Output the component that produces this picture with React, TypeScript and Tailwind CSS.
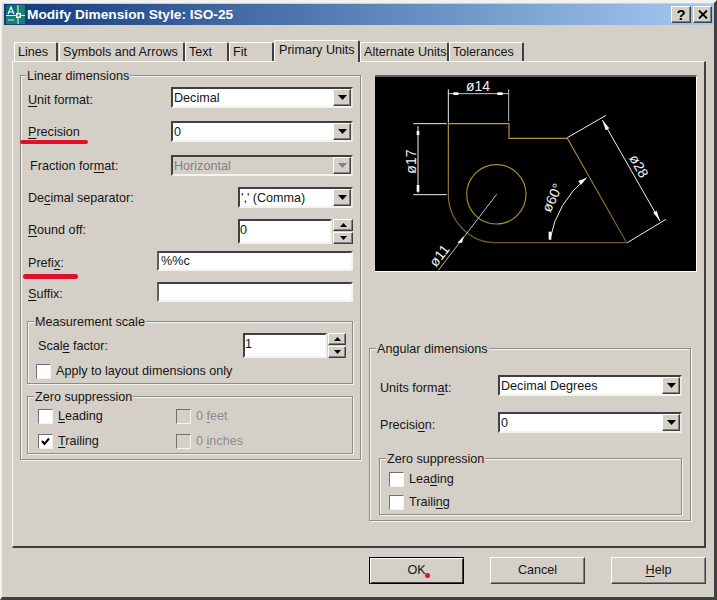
import React from "react";

const raisedBtn =
  "bg-[#d4d0c8] border border-t-white border-l-white border-r-[#404040] border-b-[#404040] shadow-[inset_-1px_-1px_0_#808080]";

function Arrow({ disabled, up, small }: { disabled?: boolean; up?: boolean; small?: boolean }) {
  const w = small ? 7 : 9;
  const h = small ? 4 : 5;
  return (
    <svg width={w} height={h} viewBox={`0 0 ${w} ${h}`}>
      <polygon
        points={up ? `${w / 2},0 ${w},${h} 0,${h}` : `0,0 ${w},0 ${w / 2},${h}`}
        fill={disabled ? "#808080" : "#000"}
      />
    </svg>
  );
}

function Combo({ value, w, disabled, h = "h-[21px]" }: { value: string; w: string; disabled?: boolean; h?: string }) {
  return (
    <div
      className={`${w} ${h} flex items-center justify-between border-2 border-t-[#404040] border-l-[#404040] border-r-[#e8e6e0] border-b-[#f4f3ef] ${disabled ? "bg-[#d4d0c8] text-[#808080]" : "bg-white"}`}
    >
      <span className="pl-[1px] pt-[2px] leading-none">{value}</span>
      <div className={`${raisedBtn} w-[18px] h-[17px] flex items-center justify-center`}>
        <Arrow disabled={disabled} />
      </div>
    </div>
  );
}

function Spinner({ value, fieldW, spinW }: { value: string; fieldW: string; spinW: string }) {
  return (
    <div className="flex">
      <div
        className={`${fieldW} h-[25px] bg-white border-2 border-t-[#404040] border-l-[#404040] border-r-[#f0efeb] border-b-[#f4f3ef] flex items-center leading-none pb-[2px]`}
      >
        {value}
      </div>
      <div className={`${spinW} h-[25px] flex flex-col gap-[1px] ml-[1px]`}>
        <div className={`${raisedBtn} h-[12px] flex items-center justify-center`}>
          <Arrow up small />
        </div>
        <div className={`${raisedBtn} h-[12px] flex items-center justify-center`}>
          <Arrow small />
        </div>
      </div>
    </div>
  );
}

function TextField({ value, w }: { value: string; w: string }) {
  return (
    <div
      className={`${w} h-[20px] bg-white border-2 border-t-[#404040] border-l-[#606060] border-r-[#f4f3ef] border-b-[#f4f3ef] flex items-center pl-[2px] leading-none`}
    >
      {value}
    </div>
  );
}

function Check({ checked, disabled, label, ml }: { checked?: boolean; disabled?: boolean; label: React.ReactNode; ml?: string }) {
  return (
    <div className={`flex items-center ${ml ?? ""} ${disabled ? "text-[#8c8c8c]" : ""}`}>
      <div
        className={`w-[15px] h-[15px] border border-t-[#707070] border-l-[#707070] border-r-[#f4f3ef] border-b-[#f4f3ef] flex items-center justify-center ${disabled ? "bg-[#d4d0c8]" : "bg-white"}`}
      >
        {checked && (
          <svg width="9" height="9" viewBox="0 0 9 9">
            <path d="M1 4 L3.5 7 L8 1.5" fill="none" stroke="#000" strokeWidth="2" />
          </svg>
        )}
      </div>
      <span className="ml-[5px] leading-none">{label}</span>
    </div>
  );
}

function Group({ title, className, legendMl, children }: { title: string; className: string; legendMl: string; children: React.ReactNode }) {
  return (
    <fieldset
      className={`${className} border border-[#8c8c86] shadow-[inset_1px_1px_0_#f4f3ef,1px_1px_0_#f4f3ef]`}
    >
      <legend className={`${legendMl} relative top-[1px] h-[15px] px-[1px] leading-[15px] bg-[#d4d0c8] whitespace-nowrap`}>{title}</legend>
      {children}
    </fieldset>
  );
}

const U = ({ children }: { children: React.ReactNode }) => <span className="underline underline-offset-2">{children}</span>;

function Tab({ label, w, active }: { label: string; w: string; active?: boolean }) {
  return (
    <div
      className={`${w} bg-[#d4d0c8] border-t border-l border-t-white border-l-white border-r-2 border-r-[#404040] rounded-t-[2px] flex items-center whitespace-nowrap ${active ? "h-[22px] -mb-[1px] z-10 pb-[3px] pl-[4px] text-[#111]" : "h-[19px] pl-[3px]"}`}
    >
      {label}
    </div>
  );
}

function Preview() {
  const dimText = "#f4f4f4";
  const txt = { fill: dimText, fontSize: 42, fontFamily: "'Liberation Sans', sans-serif" };
  return (
    <div className="w-[322px] h-[197px] ml-[6px] border-t-2 border-t-[#606060] border-b border-b-white border-r border-r-white bg-black">
      <svg width="321" height="194" viewBox="15 18 963 582" className="block">
        <defs>
          <linearGradient id="gold" x1="0" y1="0" x2="0" y2="1">
            <stop offset="0" stopColor="#c09a3a" />
            <stop offset="1" stopColor="#6e5a2a" />
          </linearGradient>
        </defs>
        <path
          d="M235 158 H417 V202 H592 L770 515 H375 C300 515 235 450 235 370 Z"
          fill="none"
          stroke="url(#gold)"
          strokeWidth="3.5"
        />
        <circle cx="379" cy="370" r="89" fill="none" stroke="#a8902c" strokeWidth="3.5" />
        <g stroke="#f0f0f0" strokeWidth="3" fill="none">
          <path d="M235 55 V155" />
          <path d="M416 55 V150" stroke="#c0c0c0" />
          <path d="M235 68 H416" stroke="#c8c8c8" />
          <path d="M130 158 H230 M130 371 H230" />
          <path d="M144 165 V365" />
          <path d="M380 370 L205 598" stroke="#c0c0c0" />
          <path d="M592 200 L708 133 M772 515 L888 445" />
          <path d="M697 147 L870 450" />
          <path d="M540 505 Q560 395 650 320" />
        </g>
        <g fill="#fff">
          <rect x="250" y="64" width="15" height="8" />
          <rect x="382" y="64" width="16" height="8" />
          <rect x="140" y="180" width="8" height="12" />
          <rect x="140" y="342" width="8" height="20" />
          <polygon points="262,515 282,495 276,515" />
          <polygon points="697,147 718,172 707,178" />
          <polygon points="870,450 850,425 860,419" />
          <rect x="536" y="482" width="8" height="24" />
          <polygon points="650,320 625,330 633,342" />
        </g>
        <text x="288" y="60" {...txt}>ø14</text>
        <text transform="translate(137 308) rotate(-90)" {...txt}>ø17</text>
        <text transform="translate(198 590) rotate(-52)" {...txt}>ø11</text>
        <text transform="translate(776 261) rotate(60)" {...txt}>ø28</text>
        <text transform="translate(541 427) rotate(-65)" {...txt}>ø60°</text>
      </svg>
    </div>
  );
}

function AppIcon() {
  return (
    <svg width="19" height="19" viewBox="0 0 19 19" className="block">
      <rect width="19" height="19" fill="#1a7f72" />
      <rect x="0" y="0" width="10" height="11" fill="#0c6a78" />
      <path d="M2 9 L5 2 L8 9 M3 7 H7" stroke="#fff" strokeWidth="1.2" fill="none" />
      <path d="M0 10.5 H19 M12 0 V19" stroke="#dff0e8" strokeWidth="1" />
      <rect x="10" y="8" width="5" height="5" fill="#f4f8f4" />
      <rect x="11.5" y="9.5" width="2" height="2" fill="#1a5f5c" />
      <path d="M2 15 H8" stroke="#c8e8d8" strokeWidth="1" />
    </svg>
  );
}

export default function App() {
  return (
    <div className="relative w-[717px] h-[600px] overflow-hidden bg-[#d4d0c8] text-[12.6px] leading-[15px] text-[#151515] [font-family:'Liberation_Sans',Arial,sans-serif] border-t-[3px] border-l-[2px] border-r-[3px] border-b-[3px] border-t-[#f2f1ed] border-l-[#f2f1ed] border-r-[#404040] border-b-[#404040]">
      {/* Title bar */}
      <div className="ml-[2px] mt-[1px] mr-[0px] h-[21px] flex items-center justify-between bg-gradient-to-r from-[#123a7c] via-[#5b83b8] to-[#a6caf0] pl-[2px] pr-[2px]">
        <div className="flex items-center">
          <AppIcon />
          <span className="ml-[2px] text-white text-[13.7px] font-bold leading-none">
            Modify Dimension Style: ISO-25
          </span>
        </div>
        <div className="flex gap-[2px]">
          <div className={`${raisedBtn} w-[20px] h-[17px] flex items-center justify-center font-bold text-[15px] leading-none text-black`}>?</div>
          <div className={`${raisedBtn} w-[19px] h-[17px] flex items-center justify-center`}>
            <svg width="10" height="9" viewBox="0 0 10 9">
              <path d="M1 0.5 L9 8.5 M9 0.5 L1 8.5" stroke="#000" strokeWidth="1.8" />
            </svg>
          </div>
        </div>
      </div>

      {/* Tabs */}
      <div className="flex items-end ml-[10px] mr-[8px] mt-[15px] relative">
        <div className="ml-[2px] flex items-end">
          <Tab label="Lines" w="w-[44px]" />
          <div className="w-[1px]" />
          <Tab label="Symbols and Arrows" w="w-[126px]" />
          <Tab label="Text" w="w-[44px]" />
          <Tab label="Fit" w="w-[45px]" />
          <Tab label="Primary Units" w="w-[86px]" active />
          <Tab label="Alternate Units" w="w-[89px]" />
          <Tab label="Tolerances" w="w-[75px]" />
        </div>
      </div>

      {/* Panel */}
      <div className="ml-[10px] w-[694px] h-[487px] border border-t-[#f4f3ef] border-l-[#f4f3ef] border-r-2 border-b-2 border-r-[#404040] border-b-[#404040] flex items-start pl-[7px] pt-[6px] gap-[8px]">
        {/* Left column */}
        <Group title="Linear dimensions" className="w-[341px] h-[392px] pl-[7px] pr-[7px]" legendMl="-ml-[2px]">
          <div className="flex justify-between items-center mt-[4px]">
            <span className="pt-[6px]"><U>U</U>nit format:</span>
            <Combo value="Decimal" w="w-[182px]" />
          </div>
          <div className="flex justify-between items-center mt-[13px]">
            <span className="pt-[2px]"><U>P</U>recision</span>
            <Combo value="0" w="w-[182px]" />
          </div>
          <div className="flex justify-between items-center mt-[13px]">
            <span className="ml-[2px] pt-[1px]">Fraction for<U>m</U>at:</span>
            <Combo value="Horizontal" w="w-[182px]" disabled />
          </div>
          <div className="flex justify-between items-center mt-[11px]">
            <span className="pt-[2px]">De<U>c</U>imal separator:</span>
            <Combo value="',' (Comma)" w="w-[115px]" />
          </div>
          <div className="flex justify-between items-center mt-[11px]">
            <span className="pb-[2px]"><U>R</U>ound off:</span>
            <Spinner value="0" fieldW="w-[94px]" spinW="w-[20px]" />
          </div>
          <div className="flex justify-between items-center mt-[7px]">
            <span className="pt-[4px]">Prefi<U>x</U>:</span>
            <TextField value="%%c" w="w-[196px]" />
          </div>
          <div className="flex justify-between items-center mt-[11px]">
            <span className="pt-[4px]"><U>S</U>uffix:</span>
            <TextField value="" w="w-[196px]" />
          </div>

          <Group title="Measurement scale" className="mt-[12px] -ml-[1px] h-[70px] pl-[10px] pr-[6px]" legendMl="-ml-[4px]">
            <div className="flex justify-between items-center mt-[4px]">
              <span className="pt-[1px]">Scal<U>e</U> factor:</span>
              <Spinner value="1" fieldW="w-[84px]" spinW="w-[18px]" />
            </div>
            <div className="-ml-[2px] mt-[6px]">
              <Check label="Apply to layout dimensions only" />
            </div>
          </Group>

          <Group title="Zero suppression" className="mt-[5px] -ml-[1px] h-[65px] pl-[10px]" legendMl="-ml-[4px]">
            <div className="flex mt-[5px]">
              <div className="w-[138px]"><Check label={<><U>L</U>eading</>} /></div>
              <Check disabled label={<>0 <U>f</U>eet</>} />
            </div>
            <div className="flex mt-[10px]">
              <div className="w-[138px]"><Check checked label={<><U>T</U>railing</>} /></div>
              <Check disabled label={<>0 <U>i</U>nches</>} />
            </div>
          </Group>
        </Group>

        {/* Right column */}
        <div className="w-[328px] flex flex-col">
          <div className="mt-[7px]">
            <Preview />
          </div>
          <Group title="Angular dimensions" className="mt-[69px] w-[322px] h-[180px] pl-[10px] pr-[8px]" legendMl="-ml-[4px]">
            <div className="flex justify-between items-center mt-[19px]">
              <span className="pt-[6px]">Units form<U>a</U>t:</span>
              <Combo value="Decimal Degrees" w="w-[184px]" />
            </div>
            <div className="flex justify-between items-center mt-[16px]">
              <span className="pt-[6px]">Precisi<U>o</U>n:</span>
              <Combo value="0" w="w-[184px]" />
            </div>
            <Group title="Zero suppression" className="mt-[18px] -ml-[1px] h-[64px] pl-[9px]" legendMl="-ml-[3px]">
              <div className="mt-[6px]">
                <Check label={<>Lea<U>d</U>ing</>} />
              </div>
              <div className="mt-[8px]">
                <Check label={<>Traili<U>n</U>g</>} />
              </div>
            </Group>
          </Group>
        </div>
      </div>

      {/* Footer buttons */}
      <div className="flex justify-end gap-[26px] mt-[9px] mr-[8px]">
        <button className="relative w-[95px] h-[27px] bg-[#d4d0c8] border border-black shadow-[inset_1px_1px_0_#fff,inset_-1px_-1px_0_#404040] text-[12.6px]">
          OK
          <span className="absolute left-[55px] top-[15px] w-[5px] h-[5px] rounded-full bg-[#e0102a]" />
        </button>
        <button className={`${raisedBtn} w-[95px] h-[27px] text-[12.6px]`}>Cancel</button>
        <button className={`${raisedBtn} w-[95px] h-[27px] text-[12.6px]`}><U>H</U>elp</button>
      </div>

      {/* Red hand-drawn marks */}
      <div className="absolute left-[18px] top-[137px] w-[68px] h-[4px] rounded-full bg-[#e0102a]" />
      <div className="absolute left-[21px] top-[271px] w-[55px] h-[5px] rounded-full bg-[#e0102a]" />
    </div>
  );
}
